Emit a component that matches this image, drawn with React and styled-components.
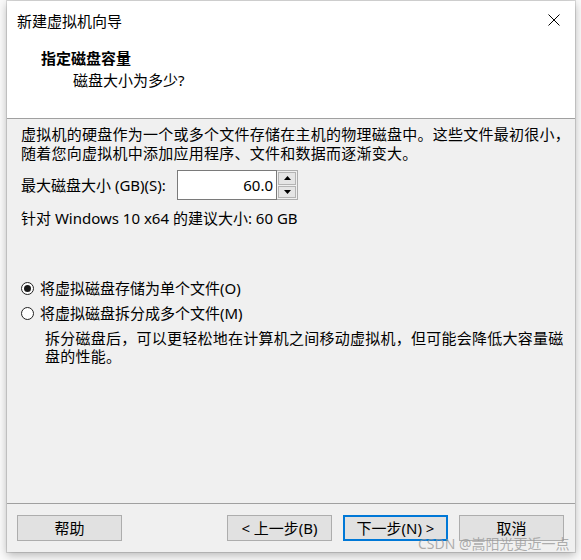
import React from "react";
import styled, { createGlobalStyle } from "styled-components";

const Global = createGlobalStyle`
  html, body { margin: 0; padding: 0; background: #fafafa; }
  body {
    font-family: "Noto Sans", "Noto Sans CJK SC", sans-serif;
    font-size: 15px;
    color: #000;
    width: 581px;
    height: 560px;
    overflow: hidden;
  }
`;

const Page = styled.div`
  position: relative;
  width: 581px;
  height: 560px;
  padding: 1px 0 0 7px;
  box-sizing: border-box;
`;

const Window = styled.div`
  width: 568px;
  height: 551px;
  background: #f0f0f0;
  box-shadow: 0 0 0 1px rgba(0, 0, 0, 0.12), 0 3px 9px rgba(0, 0, 0, 0.28);
  display: flex;
  flex-direction: column;
  box-sizing: border-box;
`;

const TitleBar = styled.div`
  height: 40px;
  background: #fff;
  display: flex;
  align-items: center;
  justify-content: space-between;
  padding: 0 14px 0 10px;
  font-size: 15px;
  line-height: 20px;
`;

const CloseButton = styled.div`
  width: 14px;
  height: 14px;
  display: flex;
  align-items: center;
  justify-content: center;
  margin-top: -2px;
`;

const Header = styled.div`
  height: 70px;
  background: #fff;
  border-bottom: 1px solid #a0a0a0;
  padding: 7px 0 0 34px;
  display: flex;
  flex-direction: column;
`;

const HeaderTitle = styled.div`
  font-weight: 700;
  font-size: 15px;
  line-height: 20px;
`;

const HeaderSub = styled.div`
  font-size: 15px;
  line-height: 22px;
  padding-left: 32px;
  margin-top: 1px;
`;

const Body = styled.div`
  flex: 1;
  padding: 6px 0 0 14px;
  display: flex;
  flex-direction: column;
`;

const Para = styled.div`
  line-height: 19px;
  letter-spacing: 0.25px;
  white-space: nowrap;
`;

const SizeRow = styled.div`
  margin-top: 7px;
  height: 30px;
  display: flex;
  align-items: center;
`;

const Label = styled.span`
  line-height: 19px;
  width: 156px;
  white-space: nowrap;
`;

const NumberBox = styled.div`
  width: 100px;
  height: 30px;
  box-sizing: border-box;
  border: 1px solid #7a7a7a;
  background: #fff;
  display: flex;
  align-items: center;
  justify-content: flex-end;
  padding-right: 3px;
  font-size: 15px;
`;

const Spinner = styled.div`
  width: 21px;
  height: 30px;
  box-sizing: border-box;
  border: 1px solid #adadad;
  border-left: none;
  display: flex;
  flex-direction: column;
  gap: 1px;
  padding: 1px;
  background: #f0f0f0;
`;

const SpinButton = styled.div`
  flex: 1;
  background: #e5e5e5;
  border: 1px solid #b4b4b4;
  display: flex;
  align-items: center;
  justify-content: center;
`;

const Hint = styled.div`
  margin-top: 9px;
  line-height: 19px;
`;

const Options = styled.div`
  margin-top: 51px;
  display: flex;
  flex-direction: column;
  gap: 6px;
`;

const RadioRow = styled.label`
  display: flex;
  align-items: center;
  gap: 6px;
  line-height: 19px;
  height: 19px;
`;

const RadioCircle = styled.span`
  width: 13px;
  height: 13px;
  box-sizing: border-box;
  border-radius: 50%;
  border: 1px solid #222;
  background: #fff;
  display: flex;
  align-items: center;
  justify-content: center;
  &::after {
    content: "";
    width: 7px;
    height: 7px;
    border-radius: 50%;
    background: ${(p) => (p.$checked ? "#1a1a1a" : "transparent")};
  }
`;

const Description = styled.div`
  padding-left: 24px;
  margin-top: 6px;
  line-height: 18px;
  white-space: nowrap;
  letter-spacing: 0.25px;
`;

const Footer = styled.div`
  border-top: 1px solid #a0a0a0;
  height: 49px;
  box-sizing: border-box;
  padding: 11px 11px 0 10px;
  display: flex;
  align-items: flex-start;
`;

const Button = styled.div`
  width: 105px;
  height: 26px;
  box-sizing: border-box;
  border: ${(p) => (p.$default ? "2px solid #0078d7" : "1px solid #adadad")};
  background: #e1e1e1;
  display: flex;
  align-items: center;
  justify-content: center;
  font-size: 15px;
  line-height: 19px;
  margin-left: ${(p) => p.$ml || 0}px;
`;

const Watermark = styled.div`
  position: absolute;
  left: 418px;
  top: 534px;
  font-size: 14px;
  line-height: 20px;
  color: rgba(150, 150, 150, 0.75);
  font-family: "Noto Sans", "Noto Sans CJK SC", sans-serif;
  pointer-events: none;
`;

const Arrow = ({ up }) => (
  <svg width="7" height="4" viewBox="0 0 7 4">
    <polygon points={up ? "0,4 7,4 3.5,0" : "0,0 7,0 3.5,4"} fill="#000" />
  </svg>
);

export default function App() {
  return (
    <>
      <Global />
      <Page>
        <Window>
          <TitleBar>
            <span>新建虚拟机向导</span>
            <CloseButton>
              <svg width="12" height="12" viewBox="0 0 12 12">
                <path d="M0.5 0.5 L11.5 11.5 M11.5 0.5 L0.5 11.5" stroke="#000" strokeWidth="1" />
              </svg>
            </CloseButton>
          </TitleBar>
          <Header>
            <HeaderTitle>指定磁盘容量</HeaderTitle>
            <HeaderSub>磁盘大小为多少?</HeaderSub>
          </Header>
          <Body>
            <Para>
              虚拟机的硬盘作为一个或多个文件存储在主机的物理磁盘中。这些文件最初很小，
              <br />
              随着您向虚拟机中添加应用程序、文件和数据而逐渐变大。
            </Para>
            <SizeRow>
              <Label>最大磁盘大小 (GB)(S):</Label>
              <NumberBox>60.0</NumberBox>
              <Spinner>
                <SpinButton>
                  <Arrow up />
                </SpinButton>
                <SpinButton>
                  <Arrow />
                </SpinButton>
              </Spinner>
            </SizeRow>
            <Hint>针对 Windows 10 x64 的建议大小: 60 GB</Hint>
            <Options>
              <RadioRow>
                <RadioCircle $checked />
                <span>将虚拟磁盘存储为单个文件(O)</span>
              </RadioRow>
              <RadioRow>
                <RadioCircle />
                <span>将虚拟磁盘拆分成多个文件(M)</span>
              </RadioRow>
            </Options>
            <Description>
              拆分磁盘后，可以更轻松地在计算机之间移动虚拟机，但可能会降低大容量磁
              <br />
              盘的性能。
            </Description>
          </Body>
          <Footer>
            <Button>帮助</Button>
            <Button $ml={105}>&lt; 上一步(B)</Button>
            <Button $ml={11} $default>下一步(N) &gt;</Button>
            <Button $ml={11}>取消</Button>
          </Footer>
        </Window>
        <Watermark>CSDN @嵩阳光更近一点</Watermark>
      </Page>
    </>
  );
}
